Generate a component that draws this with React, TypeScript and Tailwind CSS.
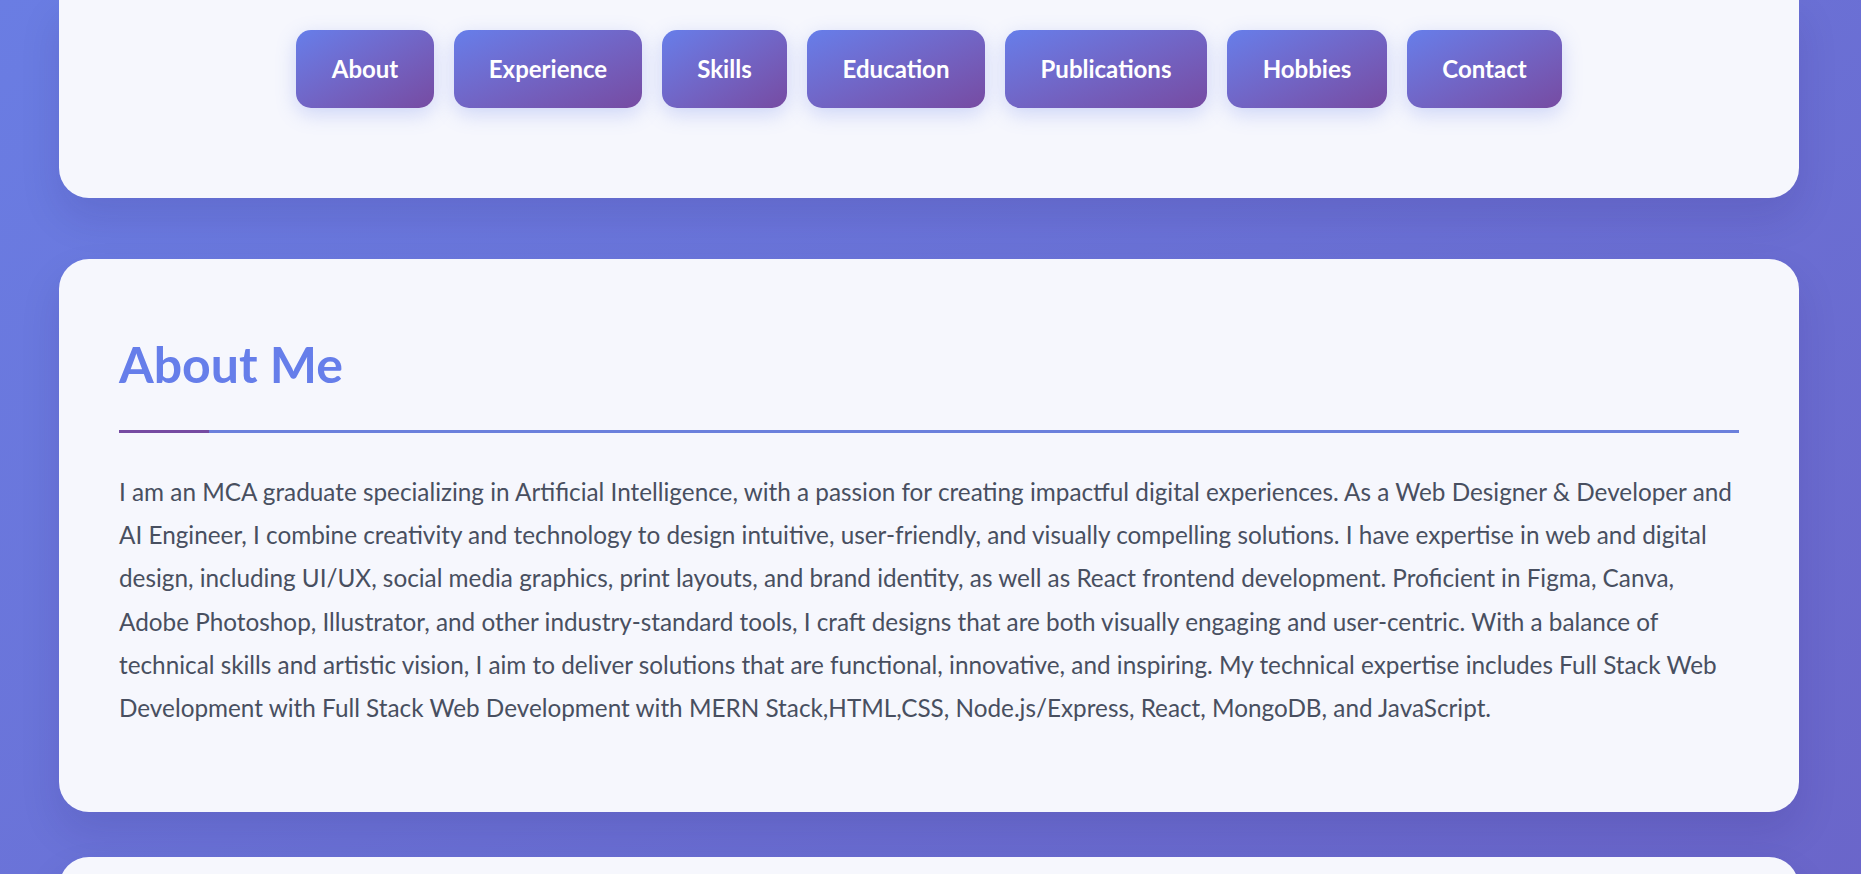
const links = [
  { label: "About", width: "w-[138px]" },
  { label: "Experience", width: "w-[188px]" },
  { label: "Skills", width: "w-[125px]" },
  { label: "Education", width: "w-[178px]" },
  { label: "Publications", width: "w-[202px]" },
  { label: "Hobbies", width: "w-[160px]" },
  { label: "Contact", width: "w-[155px]" },
];

const about =
  "I am an MCA graduate specializing in Artificial Intelligence, with a passion for creating impactful digital experiences. As a Web Designer & Developer and AI Engineer, I combine creativity and technology to design intuitive, user-friendly, and visually compelling solutions. I have expertise in web and digital design, including UI/UX, social media graphics, print layouts, and brand identity, as well as React frontend development. Proficient in Figma, Canva, Adobe Photoshop, Illustrator, and other industry-standard tools, I craft designs that are both visually engaging and user-centric. With a balance of technical skills and artistic vision, I aim to deliver solutions that are functional, innovative, and inspiring. My technical expertise includes Full Stack Web Development with Full Stack Web Development with MERN Stack,HTML,CSS, Node.js/Express, React, MongoDB, and JavaScript.";

const NavBar = () => {
  return (
    <div className="bg-[#f6f7fd] rounded-b-[30px] pt-[30px] pb-[90px] shadow-[0_20px_40px_rgba(30,20,90,0.12)]">
      <nav className="flex justify-center gap-5">
        {links.map((link) => (
          <a
            key={link.label}
            href={"#" + link.label.toLowerCase()}
            className={
              link.width +
              " h-[78px] flex items-center justify-center rounded-[15px] bg-gradient-to-br from-[#667eea] to-[#764ba2] text-white font-bold text-[24px] shadow-[0_6px_20px_rgba(102,126,234,0.28)]"
            }
          >
            {link.label}
          </a>
        ))}
      </nav>
    </div>
  );
};

const AboutSection = () => {
  return (
    <section className="mt-[61px] bg-[#f6f7fd] rounded-[30px] px-[60px] pt-[60px] pb-[83px] shadow-[0_20px_40px_rgba(30,20,90,0.12)]">
      <h2 className="mt-[15px] text-[50px] leading-[60px] font-bold text-[#667eea]">About Me</h2>
      <div className="mt-[36px] flex h-[3px]">
        <div className="w-[90px] bg-[#764ba2]" />
        <div className="flex-1 bg-[#6b80dc]" />
      </div>
      <p className="mt-[37px] text-[24.3px] leading-[43.2px] text-[#484f60]">{about}</p>
    </section>
  );
};

export default function App() {
  return (
    <div
      className="min-h-screen bg-gradient-to-br from-[#6a7de3] to-[#6a62c6] pb-10"
      style={{ fontFamily: "Lato, 'Open Sans', sans-serif" }}
    >
      <div className="w-[1740px] ml-[59px]">
        <NavBar />
        <AboutSection />
        <section className="mt-[45px] h-[300px] bg-[#f6f7fd] rounded-[30px] shadow-[0_20px_40px_rgba(30,20,90,0.12)]" />
      </div>
    </div>
  );
}
